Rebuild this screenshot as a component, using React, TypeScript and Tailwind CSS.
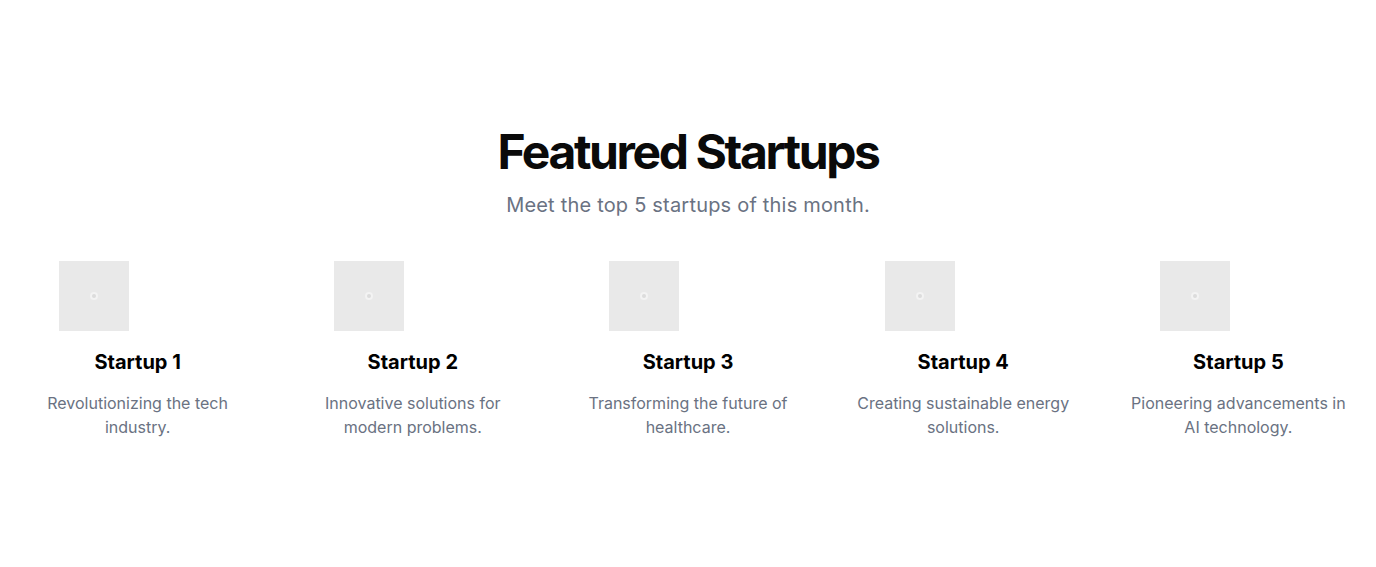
const startups = [
  { name: "Startup 1", desc: "Revolutionizing the tech industry." },
  { name: "Startup 2", desc: "Innovative solutions for modern problems." },
  { name: "Startup 3", desc: "Transforming the future of healthcare." },
  { name: "Startup 4", desc: "Creating sustainable energy solutions." },
  { name: "Startup 5", desc: "Pioneering advancements in AI technology." },
];

function Placeholder() {
  return (
    <div className="ml-[59px] flex h-[70px] w-[70px] items-center justify-center bg-[#e9e9e9]">
      <div className="h-[4px] w-[4px] rounded-full bg-[#dcdcdc] ring-2 ring-[#f3f3f3]" />
    </div>
  );
}

export default function App() {
  return (
    <section
      className="min-h-[567px] w-full bg-white pt-[128px]"
      style={{ fontFamily: "Inter, 'Noto Sans', sans-serif" }}
    >
      <div className="text-center">
        <h1 className="text-5xl font-bold tracking-tighter text-[#0a0a0a]">Featured Startups</h1>
        <p className="mt-[15px] text-xl tracking-[0.01em] text-gray-500">Meet the top 5 startups of this month.</p>
      </div>

      <div className="mt-[42px] grid grid-cols-5">
        {startups.map((s) => (
          <div key={s.name} className="flex flex-col">
            <Placeholder />
            <h3 className="mt-[17px] text-center text-xl font-bold text-black">{s.name}</h3>
            <p className="mx-auto mt-[15px] max-w-[228px] text-center text-base text-gray-500">{s.desc}</p>
          </div>
        ))}
      </div>
    </section>
  );
}
